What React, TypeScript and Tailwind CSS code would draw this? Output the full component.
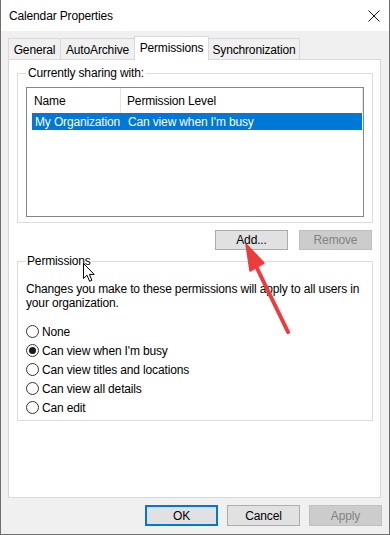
import React from "react";

const tabs = [
  { label: "General", w: "w-[52px]", cls: "border-l" },
  { label: "AutoArchive", w: "w-[74px]", cls: "border-l" },
  { label: "Permissions", w: "w-[75px]", cls: "border-l border-r", active: true },
  { label: "Synchronization", w: "w-[91px]", cls: "border-r" },
];

const options = [
  { label: "None", checked: false },
  { label: "Can view when I'm busy", checked: true },
  { label: "Can view titles and locations", checked: false },
  { label: "Can view all details", checked: false },
  { label: "Can edit", checked: false },
];

const Radio = ({ checked }: { checked: boolean }) => (
  <span className="w-[13px] h-[13px] rounded-full border border-[#333333] bg-white flex items-center justify-center shrink-0">
    {checked && <span className="w-[7px] h-[7px] rounded-full bg-[#1a1a1a]" />}
  </span>
);

const App = () => {
  return (
    <div className="relative w-[390px] h-[535px] bg-[#f0f0f0] border-l border-r border-b border-[#6e6e6e] font-['Liberation_Sans',Arial,sans-serif] text-[12px] tracking-[-0.15px] text-black overflow-hidden">
      {/* Title bar */}
      <div className="h-[31px] bg-white flex items-center justify-between pl-[8px] pr-[9px]">
        <span className="leading-[16px]">Calendar Properties</span>
        <svg width="12" height="12" viewBox="0 0 12 12" className="mt-[1px]">
          <path d="M0.5 0.5 L11.5 11.5 M11.5 0.5 L0.5 11.5" stroke="#111" strokeWidth="1" fill="none" />
        </svg>
      </div>

      <div className="pl-[7px] pt-[5px]">
        {/* Tabs */}
        <div className="flex items-end">
          {tabs.map((t) =>
            t.active ? (
              <div
                key={t.label}
                className={`${t.w} h-[24px] -mb-px relative z-10 bg-white border-t border-[#d9d9d9] ${t.cls} flex items-center justify-center pb-[1px]`}
              >
                {t.label}
              </div>
            ) : (
              <div
                key={t.label}
                className={`${t.w} h-[21px] bg-[#f0f0f0] border-t border-[#d9d9d9] ${t.cls} flex items-center justify-center pt-[2px]`}
              >
                {t.label}
              </div>
            )
          )}
        </div>

        {/* Panel */}
        <div className="w-[373px] h-[439px] bg-white border border-[#d9d9d9] pl-[8px]">
          <fieldset className="mt-[5px] w-[356px] border border-[#dcdcdc] pl-[8px] pb-[5px]">
            <legend className="px-[2px] leading-[16px]">Currently sharing with:</legend>
            <div className="mt-[6px] w-[338px] h-[130px] border border-[#828790] bg-white">
              <div className="flex h-[25px] items-center">
                <div className="w-[94px] h-full border-r border-[#e5e5e5] flex items-center pl-[7px]">Name</div>
                <div className="flex-1 h-full border-r border-[#e5e5e5] flex items-center pl-[6px]">
                  Permission Level
                </div>
              </div>
              <div className="ml-[5px] mr-[1px] h-[17px] bg-[#0078d7] text-white flex items-center">
                <span className="w-[90px] pl-[3px] whitespace-nowrap">My Organization</span>
                <span className="pl-[6px]">Can view when I'm busy</span>
              </div>
            </div>
          </fieldset>

          <div className="flex justify-end gap-[11px] mt-[7px] w-[355px]">
            <button className="w-[73px] h-[20px] bg-[#e1e1e1] border border-[#adadad] flex items-center justify-center">
              Add...
            </button>
            <button className="w-[73px] h-[20px] bg-[#cccccc] border border-[#bfbfbf] text-[#838383] flex items-center justify-center">
              Remove
            </button>
          </div>

          <fieldset className="mt-[3px] w-[356px] border border-[#dcdcdc] pl-[8px] pb-[3px]">
            <legend className="px-[1px] leading-[16px]">Permissions</legend>
            <p className="mt-[13px] leading-[14px]">
              Changes you make to these permissions will apply to all users in your organization.
            </p>
            <div className="mt-[12px] flex flex-col">
              {options.map((o) => (
                <label key={o.label} className="h-[19px] flex items-center gap-[3px]">
                  <Radio checked={o.checked} />
                  <span>{o.label}</span>
                </label>
              ))}
            </div>
          </fieldset>
        </div>
      </div>

      {/* Footer buttons */}
      <div className="flex justify-end gap-[9px] pr-[7px] mt-[7px]">
        <button className="w-[73px] h-[21px] bg-[#e1e1e1] border-2 border-[#0078d7] flex items-center justify-center">
          OK
        </button>
        <button className="w-[73px] h-[21px] bg-[#e1e1e1] border border-[#adadad] flex items-center justify-center">
          Cancel
        </button>
        <button className="w-[73px] h-[21px] bg-[#cccccc] border border-[#bfbfbf] text-[#838383] flex items-center justify-center">
          Apply
        </button>
      </div>

      {/* Red annotation arrow */}
      <svg className="absolute left-0 top-0 pointer-events-none" width="390" height="535" viewBox="0 0 390 535">
        <line x1="287" y1="332" x2="254" y2="264" stroke="#ef3b3b" strokeWidth="4" strokeLinecap="round" />
        <polygon points="245,244 263,263 249,271" fill="#ef3b3b" stroke="#ef3b3b" strokeWidth="1.5" strokeLinejoin="round" />
      </svg>

      {/* Mouse cursor */}
      <svg className="absolute left-[82px] top-[263px] pointer-events-none" width="13" height="20" viewBox="0 0 13 20">
        <path d="M0.5 0.5 L0.5 15.5 L4 12.2 L6.6 18.3 L8.9 17.3 L6.4 11.4 L11.2 11.4 Z" fill="#fff" stroke="#000" strokeWidth="1" strokeLinejoin="round" />
      </svg>
    </div>
  );
};

export default App;
